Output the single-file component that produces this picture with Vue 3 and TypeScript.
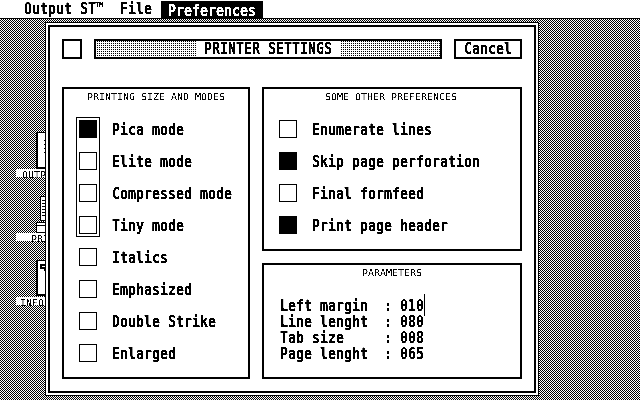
<template>
  <div class="screen">
    <header class="menubar">
      <span class="sys menu-item">Output ST™</span>
      <span class="sys menu-item">File</span>
      <span class="menu-active"><span class="sys">Preferences</span></span>
    </header>

    <main class="desktop">
      <!-- desktop icons, mostly hidden behind the dialog -->
      <div class="icon icon-output">
        <svg width="10" height="37" viewBox="0 0 10 37" shape-rendering="crispEdges">
          <rect width="10" height="37" fill="#fff" />
          <path d="M0 0h10v1H2v34h8v2H0z" />
          <path d="M8 8h2v1H8zM9 10h1v1H9zM8 12h2v1H8zM9 14h1v1H9zM8 16h2v1H8zM9 18h1v1H9zM8 20h2v1H8z" />
        </svg>
      </div>
      <div class="icon-label label-output"><span class="tiny">OUTPUT</span></div>

      <div class="icon icon-printer">
        <svg width="10" height="37" viewBox="0 0 10 37" shape-rendering="crispEdges">
          <rect x="4" y="0" width="6" height="24" fill="#fff" />
          <rect x="0" y="26" width="10" height="11" fill="#fff" />
          <path d="M4 0h6v1H5v23H4zM6 4h4v1H6zM6 7h4v1H6zM6 10h4v1H6zM6 13h4v1H6zM6 16h4v1H6zM6 19h4v1H6z" />
          <path d="M4 24h6v1H4zM0 26h10v1H1v2h9v1H1v6h9v1H0z" />
        </svg>
      </div>
      <div class="icon-label label-printer"><span class="tiny">PRINTER</span></div>

      <div class="icon icon-info">
        <svg width="10" height="36" viewBox="0 0 10 36" shape-rendering="crispEdges">
          <rect width="10" height="36" fill="#fff" />
          <path d="M0 0h10v1H2v33h8v2H0z" />
          <path d="M4 4h6v2H6v1h4v4H8V9H4zM5 7h1v1H5z" />
        </svg>
      </div>
      <div class="icon-label label-info"><span class="tiny">INFORMATION</span></div>

      <section class="dialog">
        <div class="dialog-inner">
          <div class="title-row">
            <div class="close-box"></div>
            <div class="title-bar"><span class="title-text"><span class="sys">PRINTER SETTINGS</span></span></div>
            <div class="cancel"><span class="sys">Cancel</span></div>
          </div>

          <div class="panels">
            <div class="panel panel-modes">
              <h2 class="panel-title"><span class="tiny">PRINTING SIZE AND MODES</span></h2>
              <div class="options">
                <div class="radio-group">
                  <div class="radio-frame"></div>
                  <label v-for="opt in sizeModes" :key="opt.name" class="option">
                    <span class="check" :class="{ on: opt.on }"></span>
                    <span class="sys">{{ opt.name }}</span>
                  </label>
                </div>
                <label v-for="opt in styles" :key="opt.name" class="option">
                  <span class="check" :class="{ on: opt.on }"></span>
                  <span class="sys">{{ opt.name }}</span>
                </label>
              </div>
            </div>

            <div class="side">
              <div class="panel panel-prefs">
                <h2 class="panel-title"><span class="tiny">SOME OTHER PREFERENCES</span></h2>
                <div class="options">
                  <label v-for="opt in prefs" :key="opt.name" class="option">
                    <span class="check" :class="{ on: opt.on }"></span>
                    <span class="sys">{{ opt.name }}</span>
                  </label>
                </div>
              </div>

              <div class="panel panel-params">
                <h2 class="panel-title"><span class="tiny">PARAMETERS</span></h2>
                <div class="params">
                  <div v-for="(p, i) in params" :key="p.name" class="param">
                    <span class="sys">{{ p.name.padEnd(13, "\u00a0") }}:&nbsp;{{ p.value }}</span>
                    <i v-if="i === 0" class="cursor"></i>
                  </div>
                </div>
              </div>
            </div>
          </div>
        </div>
      </section>
    </main>
  </div>
</template>

<script setup lang="ts">
interface Option {
  name: string;
  on: boolean;
}

const sizeModes: Option[] = [
  { name: "Pica mode", on: true },
  { name: "Elite mode", on: false },
  { name: "Compressed mode", on: false },
  { name: "Tiny mode", on: false },
];

const styles: Option[] = [
  { name: "Italics", on: false },
  { name: "Emphasized", on: false },
  { name: "Double Strike", on: false },
  { name: "Enlarged", on: false },
];

const prefs: Option[] = [
  { name: "Enumerate lines", on: false },
  { name: "Skip page perforation", on: true },
  { name: "Final formfeed", on: false },
  { name: "Print page header", on: true },
];

const params = [
  { name: "Left margin", value: "010" },
  { name: "Line lenght", value: "080" },
  { name: "Tab size", value: "008" },
  { name: "Page lenght", value: "065" },
];
</script>

<style>
html,
body {
  margin: 0;
  background: #fff;
}
</style>

<style scoped>
.screen {
  width: 640px;
  height: 400px;
  overflow: hidden;
  background: #fff;
  color: #000;
  display: flex;
  flex-direction: column;
  filter: grayscale(1) contrast(1000%);
}

/* 8x16 system font look: mono stretched to the tall cell */
.sys {
  display: inline-block;
  font-family: "DejaVu Sans Mono", monospace;
  font-weight: 700;
  font-size: 13.29px;
  line-height: 12.8px;
  margin: 1.6px 0;
  white-space: pre;
  transform: scaleY(1.25);
  -webkit-text-stroke: 0.15px #000;
}

.tiny {
  display: inline-block;
  font-family: "DejaVu Sans Mono", monospace;
  font-size: 9.97px;
  line-height: 8px;
  white-space: pre;
  transform: scaleY(0.85);
}

.menubar {
  height: 18px;
  flex: none;
  display: flex;
  align-items: flex-start;
  padding: 1px 0 0 24px;
  box-sizing: border-box;
}

.menu-item {
  margin-right: 16px;
}

.menu-active {
  margin-left: -7px;
  padding: 0 7px;
  height: 17px;
  background: #000;
  color: #fff;
}

.menu-active .sys {
  -webkit-text-stroke: 0.15px #fff;
}

.desktop {
  position: relative;
  flex: 1;
  border-top: 1px solid #000;
  padding: 3px 0 0 45px;
  background: repeating-conic-gradient(#000 0 25%, #fff 0 50%) 0 0 / 2px 2px;
}

.icon {
  position: absolute;
  left: 36px;
  line-height: 0;
}

.icon-output {
  top: 113px;
}

.icon-printer {
  top: 177px;
}

.icon-info {
  top: 241px;
}

.icon-label {
  position: absolute;
  left: 16px;
  height: 8px;
  background: #fff;
  white-space: nowrap;
  line-height: 8px;
}

.label-output {
  top: 150px;
  padding-left: 6px;
}

.label-printer {
  top: 214px;
  padding-left: 15px;
}

.label-info {
  top: 278px;
  padding-left: 4px;
}

.dialog {
  position: relative;
  width: 494px;
  height: 374px;
  box-sizing: border-box;
  border: 1px solid #000;
  padding: 2px;
  background: #fff;
}

.dialog-inner {
  height: 100%;
  box-sizing: border-box;
  border: 2px solid #000;
  padding: 12px;
  display: flex;
  flex-direction: column;
  gap: 28px;
}

.title-row {
  display: flex;
  height: 20px;
  flex: none;
}

.close-box {
  width: 20px;
  box-sizing: border-box;
  border: 2px solid #000;
  margin-right: 12px;
}

.title-bar {
  width: 348px;
  margin-right: 12px;
  box-sizing: border-box;
  border: 2px solid #000;
  display: flex;
  justify-content: center;
  background: repeating-conic-gradient(#000 0 25%, #fff 0 100%) 0 0 / 2px 2px;
}

.title-text {
  display: flex;
  padding: 0 8px;
  background: #fff;
}

.cancel {
  flex: 1;
  box-sizing: border-box;
  border: 2px solid #000;
  display: flex;
  justify-content: center;
}

.panels {
  flex: 1;
  display: flex;
  gap: 12px;
}

.panel {
  box-sizing: border-box;
  border: 2px solid #000;
}

.panel-modes {
  width: 188px;
}

.side {
  flex: 1;
  display: flex;
  flex-direction: column;
  gap: 12px;
}

.panel-prefs {
  height: 164px;
}

.panel-prefs .panel-title {
  padding-right: 2px;
}

.panel-params {
  flex: 1;
}

.panel-title {
  margin: 0;
  padding-top: 2px;
  height: 31px;
  box-sizing: border-box;
  font: inherit;
  line-height: 8px;
  text-align: center;
}

.options {
  padding-left: 15px;
  display: flex;
  flex-direction: column;
  gap: 14px;
}

.radio-group {
  position: relative;
  display: flex;
  flex-direction: column;
  gap: 14px;
}

.radio-frame {
  position: absolute;
  top: -3px;
  bottom: -3px;
  left: -3px;
  width: 24px;
  box-sizing: border-box;
  border: 1px solid #000;
}

.option {
  display: flex;
  align-items: center;
  gap: 15px;
  height: 18px;
}

.option .sys {
  margin: 3.6px 0 1.6px;
}

.check {
  flex: none;
  width: 18px;
  height: 18px;
  box-sizing: border-box;
  border: 1px solid #000;
}

.check.on {
  background: #000;
}

.params {
  padding-left: 16px;
}

.param {
  position: relative;
  height: 16px;
}

.cursor {
  position: absolute;
  left: 144px;
  top: -2px;
  width: 1px;
  height: 22px;
  background: #000;
}
</style>
